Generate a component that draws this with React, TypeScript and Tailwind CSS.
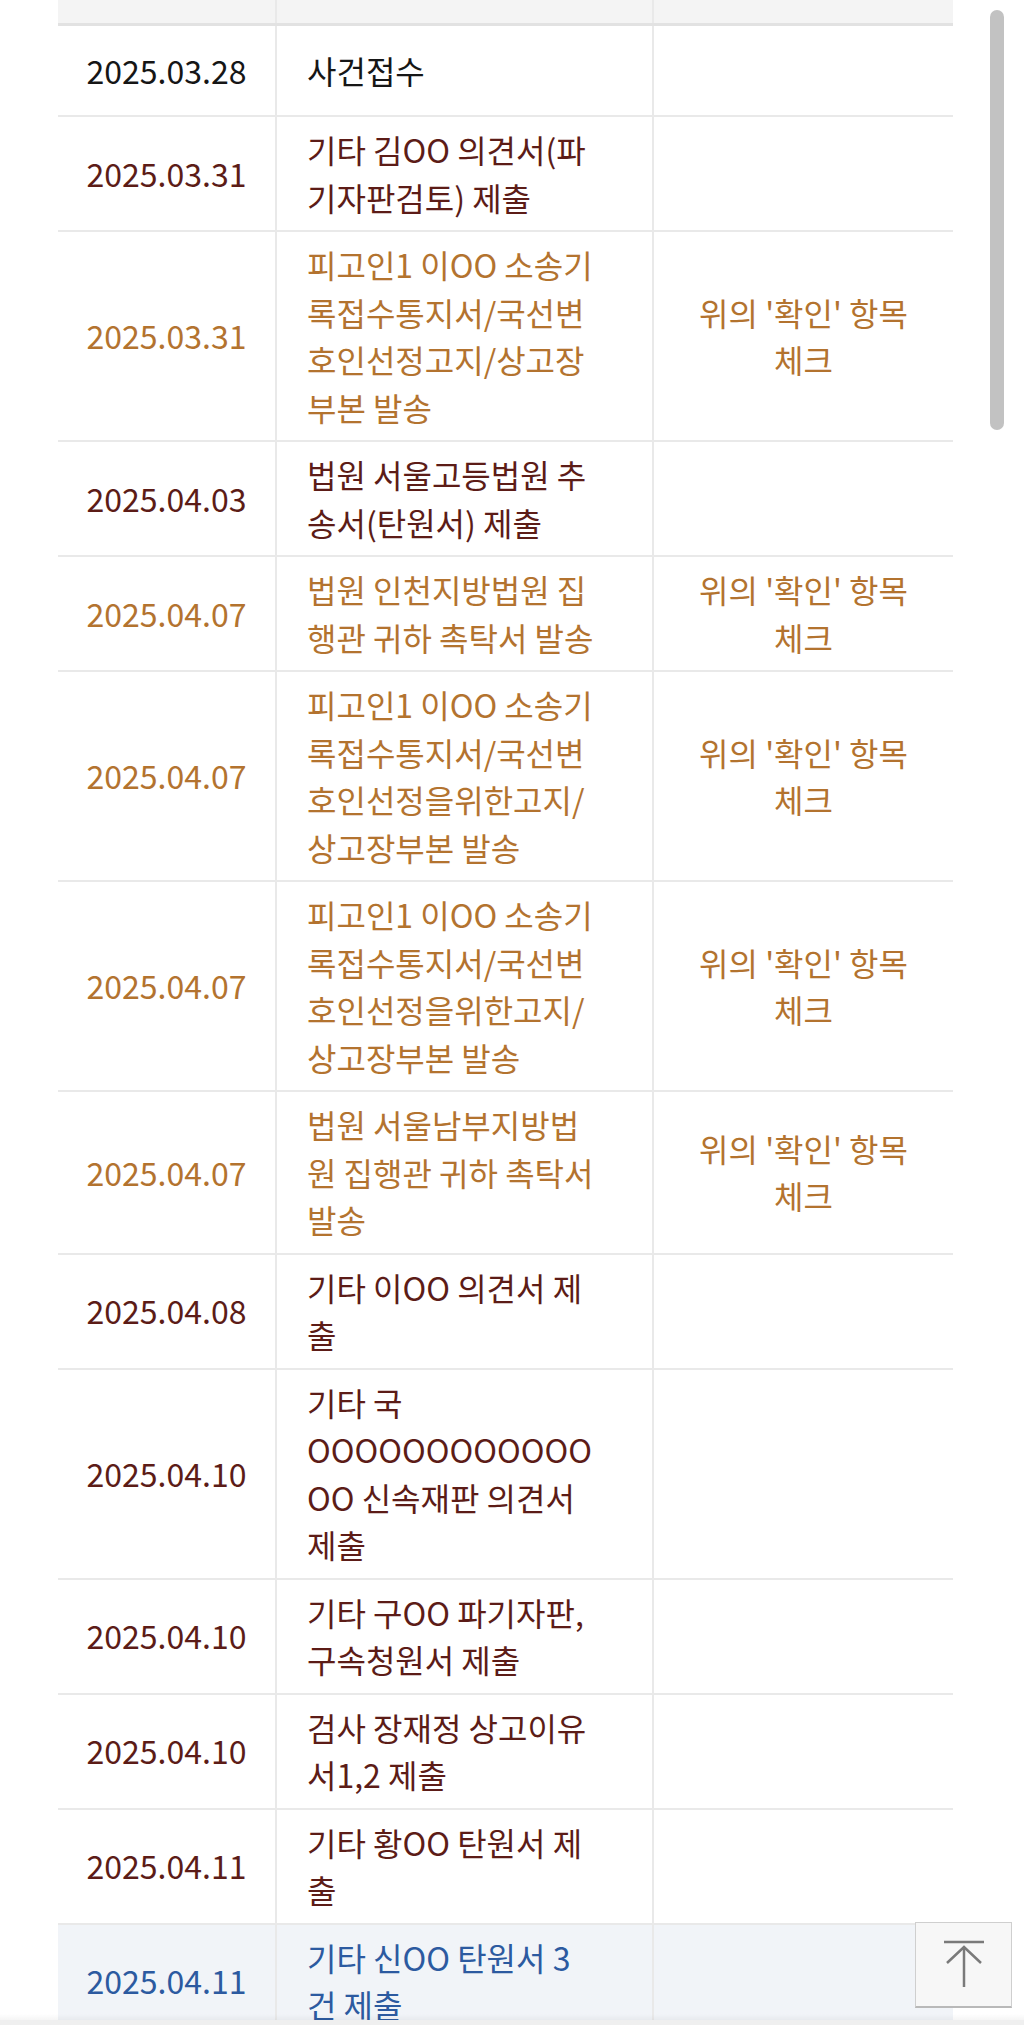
type Tone = "black" | "maroon" | "orange" | "blue";

type Row = {
  date: string;
  lines: string[];
  note?: boolean;
  tone: Tone;
};

const tones: Record<Tone, string> = {
  black: "text-[#161616]",
  maroon: "text-[#5c1c17]",
  orange: "text-[#b3732f]",
  blue: "text-[#2c5aa0]",
};

const rows: Row[] = [
  { date: "2025.03.28", lines: ["사건접수"], tone: "black" },
  { date: "2025.03.31", lines: ["기타 김OO 의견서(파", "기자판검토) 제출"], tone: "maroon" },
  {
    date: "2025.03.31",
    lines: ["피고인1 이OO 소송기", "록접수통지서/국선변", "호인선정고지/상고장", "부본 발송"],
    note: true,
    tone: "orange",
  },
  { date: "2025.04.03", lines: ["법원 서울고등법원 추", "송서(탄원서) 제출"], tone: "maroon" },
  { date: "2025.04.07", lines: ["법원 인천지방법원 집", "행관 귀하 촉탁서 발송"], note: true, tone: "orange" },
  {
    date: "2025.04.07",
    lines: ["피고인1 이OO 소송기", "록접수통지서/국선변", "호인선정을위한고지/", "상고장부본 발송"],
    note: true,
    tone: "orange",
  },
  {
    date: "2025.04.07",
    lines: ["피고인1 이OO 소송기", "록접수통지서/국선변", "호인선정을위한고지/", "상고장부본 발송"],
    note: true,
    tone: "orange",
  },
  {
    date: "2025.04.07",
    lines: ["법원 서울남부지방법", "원 집행관 귀하 촉탁서", "발송"],
    note: true,
    tone: "orange",
  },
  { date: "2025.04.08", lines: ["기타 이OO 의견서 제", "출"], tone: "maroon" },
  {
    date: "2025.04.10",
    lines: ["기타 국", "OOOOOOOOOOOO", "OO 신속재판 의견서", "제출"],
    tone: "maroon",
  },
  { date: "2025.04.10", lines: ["기타 구OO 파기자판,", "구속청원서 제출"], tone: "maroon" },
  { date: "2025.04.10", lines: ["검사 장재정 상고이유", "서1,2 제출"], tone: "maroon" },
  { date: "2025.04.11", lines: ["기타 황OO 탄원서 제", "출"], tone: "maroon" },
  { date: "2025.04.11", lines: ["기타 신OO 탄원서 3", "건 제출"], tone: "blue" },
];

function HistoryRow({ row }: { row: Row }) {
  const color = tones[row.tone];
  const bg = row.tone === "blue" ? "bg-[#f1f4f8]" : "bg-white";
  return (
    <div className={`grid min-h-[91px] grid-cols-[217px_377px_301px] border-b-2 border-[#e9e9e9] ${bg} ${color}`}>
      <div className="flex items-center justify-center">{row.date}</div>
      <div className="flex flex-col justify-center whitespace-nowrap border-l-2 border-[#e9e9e9] py-[9px] pl-[30px]">
        {row.lines.map((line, i) => (
          <span key={i}>{line}</span>
        ))}
      </div>
      <div className="flex flex-col items-center justify-center border-l-2 border-[#e9e9e9] py-[9px]">
        {row.note && (
          <>
            <span>위의 '확인' 항목</span>
            <span>체크</span>
          </>
        )}
      </div>
    </div>
  );
}

export default function App() {
  return (
    <div
      className="relative h-[2025px] w-[1024px] overflow-hidden bg-white text-[32px] leading-[47.5px]"
      style={{ fontFamily: '"Noto Sans CJK KR", "Noto Sans", sans-serif' }}
    >
      <div className="ml-[58px] w-[895px]">
        <div className="grid h-[26px] grid-cols-[217px_377px_301px] border-b-[3px] border-[#e2e2e2] bg-[#f4f4f4]">
          <div />
          <div className="border-l-2 border-[#e9e9e9]" />
          <div className="border-l-2 border-[#e9e9e9]" />
        </div>
        {rows.map((row, i) => (
          <HistoryRow key={i} row={row} />
        ))}
      </div>

      {/* scrollbar thumb */}
      <div className="absolute left-[990px] top-[10px] h-[420px] w-[14px] rounded-full bg-[#c2c2c2]" />

      {/* back to top */}
      <button className="absolute bottom-[17px] right-[12px] flex h-[86px] w-[97px] items-center justify-center border border-b-2 border-[#cfcfcf] border-b-[#b9b9b9] bg-[#f7f7f7]">
        <svg width="44" height="50" viewBox="0 0 44 50" fill="none" stroke="#7a7a7a" strokeWidth="2.5">
          <path d="M2 2h40" />
          <path d="M5 23L22 7l17 16" />
          <path d="M22 7v40" />
        </svg>
      </button>

      {/* bottom toolbar edge */}
      <div className="absolute bottom-0 left-0 w-full">
        <div className="h-[6px] bg-gradient-to-b from-transparent to-black/[0.04]" />
        <div className="h-[5px] bg-[#efefef]" />
      </div>
    </div>
  );
}
